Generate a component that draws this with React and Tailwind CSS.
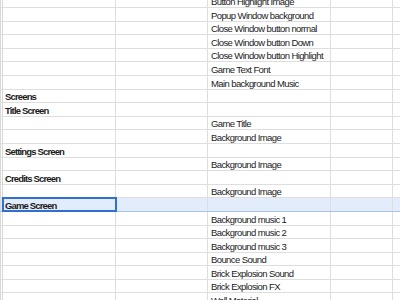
import React from 'react';

const rows = [
  { c: 'Button Highlight Image' },
  { c: 'Popup Window background' },
  { c: 'Close Window button normal' },
  { c: 'Close Window button Down' },
  { c: 'Close Window button Highlight' },
  { c: 'Game Text Font' },
  { c: 'Main background Music' },
  { a: 'Screens' },
  { a: 'Title Screen' },
  { c: 'Game Title' },
  { c: 'Background Image' },
  { a: 'Settings Screen' },
  { c: 'Background Image' },
  { a: 'Credits Screen' },
  { c: 'Background Image' },
  { a: 'Game Screen', selected: true },
  { c: 'Background music 1' },
  { c: 'Background music 2' },
  { c: 'Background music 3' },
  { c: 'Bounce Sound' },
  { c: 'Brick Explosion Sound' },
  { c: 'Brick Explosion FX' },
  { c: 'Wall Material' },
];

const Row = ({ row }) => {
  const sel = row.selected;
  return (
    <div
      className={`flex h-[13.6px] shrink-0 border-b ${
        sel ? 'bg-[#e2ecfb] border-[#a9c3ea]' : 'bg-white border-[#dedede]'
      }`}
    >
      <div className="w-[3px] shrink-0 border-l border-r border-[#d8d8d8]" />
      <div
        className={`w-[113px] shrink-0 border-r border-[#dedede] flex items-end pl-[2px] pb-[0.5px] overflow-hidden whitespace-nowrap ${
          sel ? 'outline-2 outline-[#2f6fd1] -outline-offset-1 relative z-10' : ''
        }`}
      >
        {row.a && <span className="font-bold tracking-[-0.85px]">{row.a}</span>}
      </div>
      <div className="w-[92px] shrink-0 border-r border-[#dedede]" />
      <div className="w-[123px] shrink-0 border-r border-[#dedede] flex items-end pl-[3px] pb-[0.5px] overflow-hidden whitespace-nowrap">
        {row.c && <span className="tracking-[-0.6px]">{row.c}</span>}
      </div>
      <div className="w-[62px] shrink-0 border-r border-[#dedede]" />
      <div className="flex-1" />
    </div>
  );
};

export default function App() {
  return (
    <div className="w-[400px] h-[300px] overflow-hidden bg-white text-[#1b1b1b] text-[9.5px] leading-none font-['Liberation_Sans',Arial,sans-serif]">
      <div className="flex flex-col mt-[-5.6px]">
        {rows.map((row, i) => (
          <Row key={i} row={row} />
        ))}
      </div>
    </div>
  );
}
